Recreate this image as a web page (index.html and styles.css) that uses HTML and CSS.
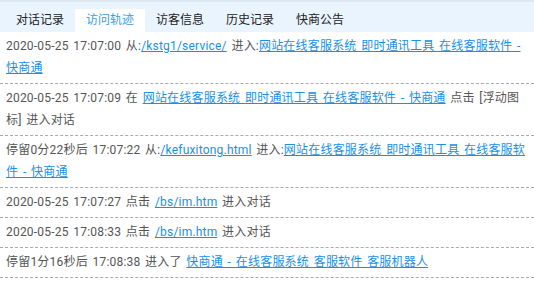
FILE: index.html
```html
<!DOCTYPE html>
<html lang="zh">
<head>
    <meta charset="UTF-8">
    <meta name="viewport" content="width=device-width, initial-scale=1.0">
    <link rel="stylesheet" href="styles.css">
</head>
<body>
    <div class="panel">
        <ul class="tabs">
            <li class="tab">对话记录</li>
            <li class="tab active">访问轨迹</li>
            <li class="tab">访客信息</li>
            <li class="tab">历史记录</li>
            <li class="tab">快商公告</li>
        </ul>
        <ul class="track">
            <li>2020-05-25 17:07:00 从:<a href="#">/kstg1/service/</a> 进入:<a href="#">网站在线客服系统 即时通讯工具 在线客服软件 - 快商通</a></li>
            <li>2020-05-25 17:07:09 在 <a href="#">网站在线客服系统 即时通讯工具 在线客服软件 - 快商通</a> 点击 [浮动图标] 进入对话</li>
            <li>停留0分22秒后 17:07:22 从:<a href="#">/kefuxitong.html</a> 进入:<a href="#">网站在线客服系统 即时通讯工具 在线客服软件 - 快商通</a></li>
            <li>2020-05-25 17:07:27 点击 <a href="#">/bs/im.htm</a> 进入对话</li>
            <li>2020-05-25 17:08:33 点击 <a href="#">/bs/im.htm</a> 进入对话</li>
            <li>停留1分16秒后 17:08:38 进入了 <a href="#">快商通 - 在线客服系统 客服软件 客服机器人</a></li>
        </ul>
    </div>
</body>
</html>
```
FILE: styles.css
```css
html, body {
    margin: 0;
    background: #fff;
}

.panel {
    font-family: Roboto, "Noto Sans CJK SC", sans-serif;
    font-size: 12px;
    color: #555;
}

.tabs {
    display: flex;
    margin: 0;
    padding: 7px 0 0 5px;
    list-style: none;
    background: #eaf4fe;
    border-top: 2px solid #dde9f5;
    height: 23px;
}

.tab {
    width: 70px;
    height: 23px;
    line-height: 23px;
    text-align: center;
    color: #222;
}

.tab.active {
    background: #fff;
    color: #3a9be8;
}

.track {
    margin: 0;
    padding: 0;
    list-style: none;
}

.track li {
    padding: 3px 2px 4px 6px;
    line-height: 22px;
    letter-spacing: 0.2px;
    word-spacing: 1.5px;
    border-bottom: 1px dashed #aaa;
}

.track a {
    color: #1a8fe6;
    text-decoration: underline;
}
```
